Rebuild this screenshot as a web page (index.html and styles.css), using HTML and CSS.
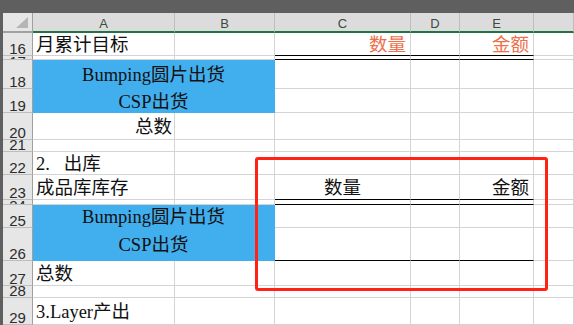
FILE: index.html
```html
<!DOCTYPE html>
<html lang="zh-CN">
<head>
  <meta charset="UTF-8" />
  <meta name="viewport" content="width=device-width, initial-scale=1.0"/>
  <title>出货统计</title>
  <link rel="stylesheet" href="styles.css">
</head>
<body>
  <div class="top-bar"></div>

  <div class="sheet">
    <!-- column headers -->
    <div class="corner"></div>
    <div class="col-head">A</div>
    <div class="col-head">B</div>
    <div class="col-head">C</div>
    <div class="col-head">D</div>
    <div class="col-head">E</div>
    <div class="col-head"></div>

    <!-- 16 -->
    <div class="rh">16</div>
    <div class="cell">月累计目标</div>
    <div class="cell"></div>
    <div class="cell right orange line">数量</div>
    <div class="cell line"></div>
    <div class="cell right orange line">金额</div>
    <div class="cell"></div>

    <!-- 17 -->
    <div class="rh tiny">17</div>
    <div class="cell"></div>
    <div class="cell"></div>
    <div class="cell line"></div>
    <div class="cell line"></div>
    <div class="cell line"></div>
    <div class="cell"></div>

    <!-- 18 -->
    <div class="rh">18</div>
    <div class="cell blue"><span class="lat">Bumping</span>圆片出货</div>
    <div class="cell"></div>
    <div class="cell"></div>
    <div class="cell"></div>
    <div class="cell"></div>

    <!-- 19 -->
    <div class="rh">19</div>
    <div class="cell blue"><span class="lat">CSP</span>出货</div>
    <div class="cell"></div>
    <div class="cell"></div>
    <div class="cell"></div>
    <div class="cell"></div>

    <!-- 20 -->
    <div class="rh">20</div>
    <div class="cell across">总数</div>
    <div class="cell"></div>
    <div class="cell"></div>
    <div class="cell"></div>
    <div class="cell"></div>

    <!-- 21 -->
    <div class="rh">21</div>
    <div class="cell"></div>
    <div class="cell"></div>
    <div class="cell"></div>
    <div class="cell"></div>
    <div class="cell"></div>
    <div class="cell"></div>

    <!-- 22 -->
    <div class="rh">22</div>
    <div class="cell"><span class="lat">2.&nbsp;&nbsp;&nbsp;</span>出库</div>
    <div class="cell"></div>
    <div class="cell"></div>
    <div class="cell"></div>
    <div class="cell"></div>
    <div class="cell"></div>

    <!-- 23 -->
    <div class="rh">23</div>
    <div class="cell">成品库库存</div>
    <div class="cell"></div>
    <div class="cell mid line">数量</div>
    <div class="cell line"></div>
    <div class="cell right line">金额</div>
    <div class="cell"></div>

    <!-- 24 -->
    <div class="rh tiny">24</div>
    <div class="cell"></div>
    <div class="cell"></div>
    <div class="cell line"></div>
    <div class="cell line"></div>
    <div class="cell line"></div>
    <div class="cell"></div>

    <!-- 25 -->
    <div class="rh">25</div>
    <div class="cell blue"><span class="lat">Bumping</span>圆片出货</div>
    <div class="cell"></div>
    <div class="cell"></div>
    <div class="cell"></div>
    <div class="cell"></div>

    <!-- 26 -->
    <div class="rh">26</div>
    <div class="cell blue"><span class="lat">CSP</span>出货</div>
    <div class="cell line"></div>
    <div class="cell line"></div>
    <div class="cell line"></div>
    <div class="cell"></div>

    <!-- 27 -->
    <div class="rh">27</div>
    <div class="cell">总数</div>
    <div class="cell"></div>
    <div class="cell"></div>
    <div class="cell"></div>
    <div class="cell"></div>
    <div class="cell"></div>

    <!-- 28 -->
    <div class="rh">28</div>
    <div class="cell"></div>
    <div class="cell"></div>
    <div class="cell"></div>
    <div class="cell"></div>
    <div class="cell"></div>
    <div class="cell"></div>

    <!-- 29 -->
    <div class="rh">29</div>
    <div class="cell"><span class="lat">3.Layer</span>产出</div>
    <div class="cell"></div>
    <div class="cell"></div>
    <div class="cell"></div>
    <div class="cell"></div>
    <div class="cell"></div>

    <!-- red highlight round the outbound block -->
    <div class="highlight"></div>
  </div>
</body>
</html>
```

FILE: styles.css
```css
:root {
  --frame: #5f5f5f;
  --head: #dcdcdc;
  --row-head: #e6e6e6;
  --head-line: #bdbdbd;
  --grid: #d4d4d4;
  --green: #217346;
  --blue: #41aeee;
  --orange: #ee6f4c;
  --red: #ff2215;
}

* {
  box-sizing: border-box;
}

body {
  margin: 0;
  width: 574px;
  height: 325px;
  overflow: hidden;
  background-color: var(--frame);
}

.top-bar {
  height: 13px;
  background-color: var(--frame);
}

.sheet {
  position: relative;
  margin-left: 3px;
  height: 312px;
  display: grid;
  grid-template-columns: 30px 142px 100px 136px 49px 74px 1fr;
  grid-template-rows: 20px 23px 4px 29px 24px 27px 12px 23px 25px 5px 23px 33px 25px 12px 1fr;
  background-color: white;
  font-family: 'Liberation Serif', 'Noto Sans CJK SC', serif;
  font-size: 18.5px;
  color: #111;
}

.corner {
  position: relative;
  background-color: var(--row-head);
  border-right: 1px solid #a0a0a0;
  border-bottom: 2px solid #a0a0a0;
}

.corner::after {
  content: "";
  position: absolute;
  right: 4px;
  bottom: 3px;
  width: 12px;
  height: 11px;
  background-color: #b5b5b5;
  clip-path: polygon(100% 0, 100% 100%, 0 100%);
}

.col-head {
  display: flex;
  align-items: center;
  justify-content: center;
  padding-top: 3px;
  background-color: var(--head);
  border-right: 1px solid var(--head-line);
  border-bottom: 2px solid var(--green);
  font-family: 'Liberation Sans', sans-serif;
  font-size: 13px;
  color: #3d4a42;
}

.rh {
  display: flex;
  align-items: flex-end;
  justify-content: center;
  overflow: hidden;
  padding-bottom: 1px;
  background-color: var(--row-head);
  border-right: 1px solid #a0a0a0;
  border-bottom: 1px solid var(--head-line);
  font-family: 'Liberation Sans', sans-serif;
  font-size: 15px;
  line-height: 11px;
  color: #2b2b2b;
}

/* rows squeezed to a few pixels: only the top of the number shows */
.rh.tiny {
  align-items: flex-start;
  padding: 0;
}

.cell {
  display: flex;
  align-items: center;
  padding: 2px 3px 0;
  overflow: hidden;
  white-space: nowrap;
  line-height: 20px;
  border-right: 1px solid var(--grid);
  border-bottom: 1px solid var(--grid);
}

.cell.right {
  justify-content: flex-end;
  padding-right: 4px;
}

.cell.mid {
  justify-content: center;
}

.cell.orange {
  color: var(--orange);
}

.cell.line {
  border-bottom-color: #000;
}

.cell.blue {
  grid-column: span 2;
  justify-content: center;
  background-color: var(--blue);
  border-color: var(--blue);
}

/* centred across A:B, gridline between them stays */
.cell.across {
  grid-column: span 2;
  justify-content: center;
  background: linear-gradient(to right, transparent 141px, var(--grid) 141px, var(--grid) 142px, transparent 142px);
}

.highlight {
  position: absolute;
  left: 252px;
  top: 144px;
  width: 293px;
  height: 134px;
  border: 3px solid var(--red);
  border-radius: 3px;
}
```
